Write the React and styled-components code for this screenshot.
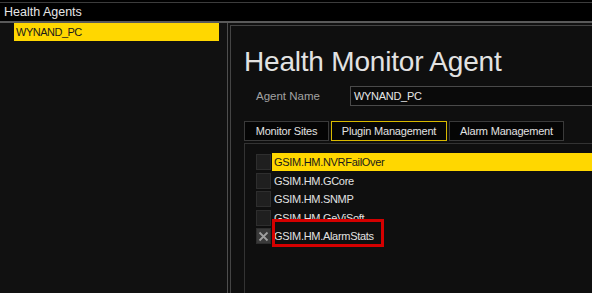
import React from 'react';
import styled, { createGlobalStyle } from 'styled-components';

const plugins = [
    { name: 'GSIM.HM.NVRFailOver', selected: true },
    { name: 'GSIM.HM.GCore' },
    { name: 'GSIM.HM.SNMP' },
    { name: 'GSIM.HM.GeViSoft' },
    { name: 'GSIM.HM.AlarmStats', checked: true, marked: true },
];

const tabs = [
    { label: 'Monitor Sites', width: 85 },
    { label: 'Plugin Management', width: 116, active: true },
    { label: 'Alarm Management', width: 115 },
];

export default function App() {
    return (
        <Frame>
            <GlobalStyle />
            <TitleBar>Health Agents</TitleBar>

            <Body>
                <AgentList>
                    <AgentItem>WYNAND_PC</AgentItem>
                </AgentList>

                <RightPanel>
                    <Inner>
                        <Title>Health Monitor Agent</Title>

                        <FieldRow>
                            <FieldLabel>Agent Name</FieldLabel>
                            <FieldInput>WYNAND_PC</FieldInput>
                        </FieldRow>

                        <TabBar>
                            {tabs.map((t) => (
                                <Tab key={t.label} $active={t.active} $width={t.width}>
                                    {t.label}
                                </Tab>
                            ))}
                        </TabBar>

                        <TabPanel>
                            {plugins.map((p) => (
                                <PluginRow key={p.name}>
                                    <CheckBox $checked={p.checked}>
                                        {p.checked && (
                                            <svg width="11" height="11" viewBox="0 0 11 11">
                                                <path d="M1.5 1.5 L9.5 9.5 M9.5 1.5 L1.5 9.5" stroke="#a0a0a0" strokeWidth="1.8" />
                                            </svg>
                                        )}
                                    </CheckBox>
                                    <PluginName $selected={p.selected}>
                                        {p.name}
                                        {p.marked && <RedMark />}
                                    </PluginName>
                                </PluginRow>
                            ))}
                        </TabPanel>
                    </Inner>
                </RightPanel>
            </Body>
        </Frame>
    );
}

const GlobalStyle = createGlobalStyle`
    body {
        margin: 0;
        background: #000;
        overflow: hidden;
    }
`;

const Frame = styled.div`
    width: 592px;
    height: 293px;
    display: flex;
    flex-direction: column;
    background: #000;
    font-family: "Liberation Sans", Arial, sans-serif;
    overflow: hidden;
`;

const TitleBar = styled.div`
    margin-top: 2px;
    border-top: 1px solid #3c3c3c;
    border-bottom: 2px solid #5a5a5a;
    height: 18px;
    line-height: 18px;
    padding-left: 4px;
    font-size: 12.5px;
    color: #e6e6e6;
`;

const Body = styled.div`
    flex: 1;
    display: flex;
    background: #111;
    min-height: 0;
`;

const AgentList = styled.div`
    width: 227px;
    flex: none;
    padding: 0 8px 0 14px;
    box-sizing: border-box;
`;

const AgentItem = styled.div`
    height: 18px;
    line-height: 18px;
    padding-left: 2px;
    background: #ffd700;
    color: #1a1a1a;
    font-size: 11px;
    letter-spacing: -0.5px;
`;

const RightPanel = styled.div`
    flex: 1;
    border-left: 1px solid #4e4e4e;
    padding: 2px 0 0 2px;
    display: flex;
    min-width: 0;
`;

const Inner = styled.div`
    flex: 1;
    border-left: 1px solid #444;
    border-top: 1px solid #444;
    padding-left: 13px;
    background: #0f0f0f;
    min-width: 0;
    overflow: hidden;
`;

const Title = styled.div`
    margin-top: 20px;
    height: 32px;
    line-height: 32px;
    font-size: 28px;
    letter-spacing: -0.2px;
    color: #e2e2e2;
    white-space: nowrap;
`;

const FieldRow = styled.div`
    margin-top: 8px;
    display: flex;
    align-items: center;
    padding-left: 12px;
    white-space: nowrap;
`;

const FieldLabel = styled.div`
    width: 94px;
    flex: none;
    font-size: 11.5px;
    color: #a2a2a2;
`;

const FieldInput = styled.div`
    width: 300px;
    flex: none;
    height: 18px;
    line-height: 18px;
    border: 1px solid #4a4a4a;
    padding-left: 3px;
    background: #0a0a0a;
    color: #e6e6e6;
    font-size: 11px;
    letter-spacing: -0.3px;
`;

const TabBar = styled.div`
    margin-top: 15px;
    display: flex;
    gap: 2px;
`;

const Tab = styled.div`
    width: ${(p) => p.$width}px;
    flex: none;
    height: 20px;
    box-sizing: border-box;
    line-height: 18px;
    text-align: center;
    border: 1px solid ${(p) => (p.$active ? '#d8b900' : '#3a3a3a')};
    background: #050505;
    color: #e2e2e2;
    font-size: 11px;
    letter-spacing: -0.2px;
    white-space: nowrap;
`;

const TabPanel = styled.div`
    margin-top: 2px;
    height: 200px;
    border-left: 1px solid #333;
    border-top: 1px solid #333;
    padding: 9px 0 0 11px;
    display: flex;
    flex-direction: column;
`;

const PluginRow = styled.div`
    height: 18.5px;
    flex: none;
    display: flex;
    align-items: center;
`;

const CheckBox = styled.div`
    width: 15px;
    height: 16px;
    flex: none;
    box-sizing: border-box;
    border: 1px solid #2e2e2e;
    background: ${(p) => (p.$checked ? '#3a3a3a' : '#1f1f1f')};
    display: flex;
    align-items: center;
    justify-content: center;
    margin-right: 1px;
`;

const PluginName = styled.div`
    position: relative;
    flex: 1;
    height: 18px;
    line-height: 18px;
    padding-left: 2px;
    font-size: 11px;
    letter-spacing: -0.3px;
    white-space: nowrap;
    background: ${(p) => (p.$selected ? '#ffd700' : 'transparent')};
    color: ${(p) => (p.$selected ? '#1a1a1a' : '#e2e2e2')};
`;

const RedMark = styled.span`
    position: absolute;
    left: 0;
    top: -8px;
    width: 112px;
    height: 28px;
    box-sizing: border-box;
    border: 3px solid #d40000;
`;
